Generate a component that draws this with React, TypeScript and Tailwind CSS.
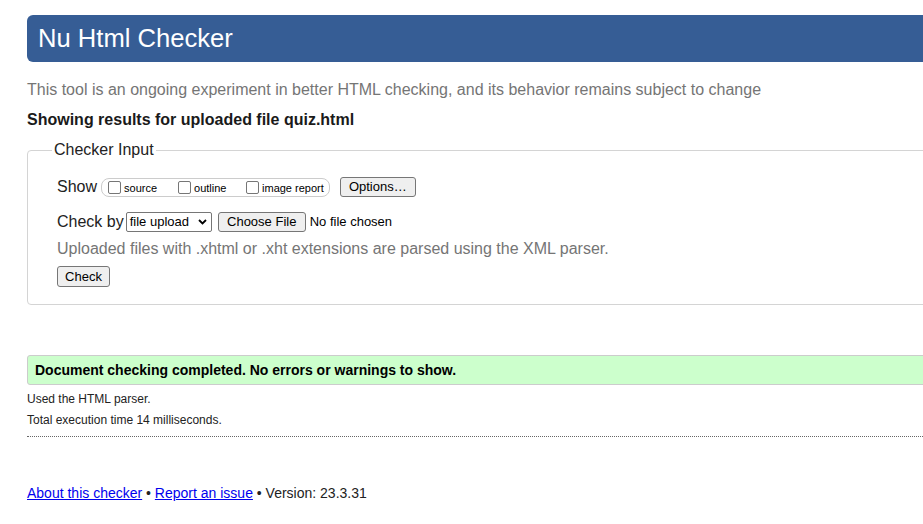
import React from "react";

// Nu Html Checker – results page (uploaded file, no errors)

const font = { fontFamily: '"Liberation Sans", Arial, sans-serif' };

function Checkbox({ label }: { label: string }) {
  return (
    <label className="flex items-center">
      <span className="inline-block w-[13px] h-[13px] border border-[#767676] rounded-[2px] bg-white mr-[3px]" />
      <span className="text-[11px] leading-[13px] text-black pt-[3px]">{label}</span>
    </label>
  );
}

function NativeButton({ children, className = "" }: { children: React.ReactNode; className?: string }) {
  return (
    <span
      className={
        "inline-flex items-center justify-center h-[20px] border border-[#767676] rounded-[3px] bg-[#efefef] text-[13px] text-black " +
        className
      }
    >
      {children}
    </span>
  );
}

export default function App() {
  return (
    <div className="w-full overflow-hidden bg-white" style={font}>
      <div className="w-[1100px] px-[27px] pt-[15px] pb-[24px]">
        {/* Header */}
        <div className="h-[47px] rounded-[6px] bg-[#365d95] pl-[11px] flex items-center">
          <h1 className="text-[25.6px] leading-none text-white">Nu Html Checker</h1>
        </div>

        <p className="mt-[18px] text-[16px] leading-[20px] text-[#757575]">
          This tool is an ongoing experiment in better HTML checking, and its behavior remains subject to change
        </p>
        <p className="mt-[10px] text-[16px] leading-[20px] font-bold text-[#1a1a1a]">
          Showing results for uploaded file quiz.html
        </p>

        {/* Checker input */}
        <fieldset className="mt-[10px] border border-[#d4d4d4] rounded-[4px] pl-[29px] pb-[16px]">
          <legend className="ml-[-5px] px-[2px] text-[16px] leading-[20px] text-[#222]">Checker Input</legend>

          <div className="mt-[16px] flex items-center h-[22px]">
            <span className="text-[16px] text-[#222] mr-[4px]">Show</span>
            <div className="flex items-center h-[19px] border border-[#cccccc] rounded-[8px] pl-[6px] pr-[5px]">
              <div className="w-[70px]">
                <Checkbox label="source" />
              </div>
              <div className="w-[68px]">
                <Checkbox label="outline" />
              </div>
              <Checkbox label="image report" />
            </div>
            <NativeButton className="ml-[10px] w-[76px]">Options…</NativeButton>
          </div>

          <div className="mt-[13px] flex items-center h-[22px]">
            <span className="text-[16px] text-[#222] mr-[2px]">Check by</span>
            <span className="inline-flex items-center h-[20px] w-[86px] border border-[#767676] rounded-[2px] bg-white pl-[3px] text-[13px] text-black">
              file upload
              <svg className="ml-auto mr-[4px]" width="9" height="6" viewBox="0 0 9 6">
                <path d="M1 1l3.5 3.5L8 1" fill="none" stroke="#000" strokeWidth="1.8" />
              </svg>
            </span>
            <NativeButton className="ml-[6px] w-[88px]">Choose File</NativeButton>
            <span className="ml-[4px] text-[13px] text-black">No file chosen</span>
          </div>

          <p className="mt-[6px] text-[16px] leading-[20px] text-[#757575]">
            Uploaded files with .xhtml or .xht extensions are parsed using the XML parser.
          </p>

          <div className="mt-[5px]">
            <NativeButton className="w-[53px] h-[21px]">Check</NativeButton>
          </div>
        </fieldset>

        {/* Result */}
        <div className="mt-[50px] h-[30px] border border-[#cccccc] rounded-[3px] bg-[#ccffcc] flex items-center pl-[7px]">
          <span className="text-[14px] font-bold text-black">Document checking completed. No errors or warnings to show.</span>
        </div>

        <p className="mt-[7px] text-[12px] leading-[15px] text-[#222]">Used the HTML parser.</p>
        <p className="mt-[6px] text-[12px] leading-[15px] text-[#222]">Total execution time 14 milliseconds.</p>

        <div className="mt-[8px] border-t border-dotted border-[#666]" />

        {/* Footer */}
        <p className="mt-[48px] text-[14px] leading-[17px] text-[#222]">
          <a href="#" className="text-[#0000ee] underline">About this checker</a>
          {" • "}
          <a href="#" className="text-[#0000ee] underline">Report an issue</a>
          {" • Version: 23.3.31"}
        </p>
      </div>
    </div>
  );
}
